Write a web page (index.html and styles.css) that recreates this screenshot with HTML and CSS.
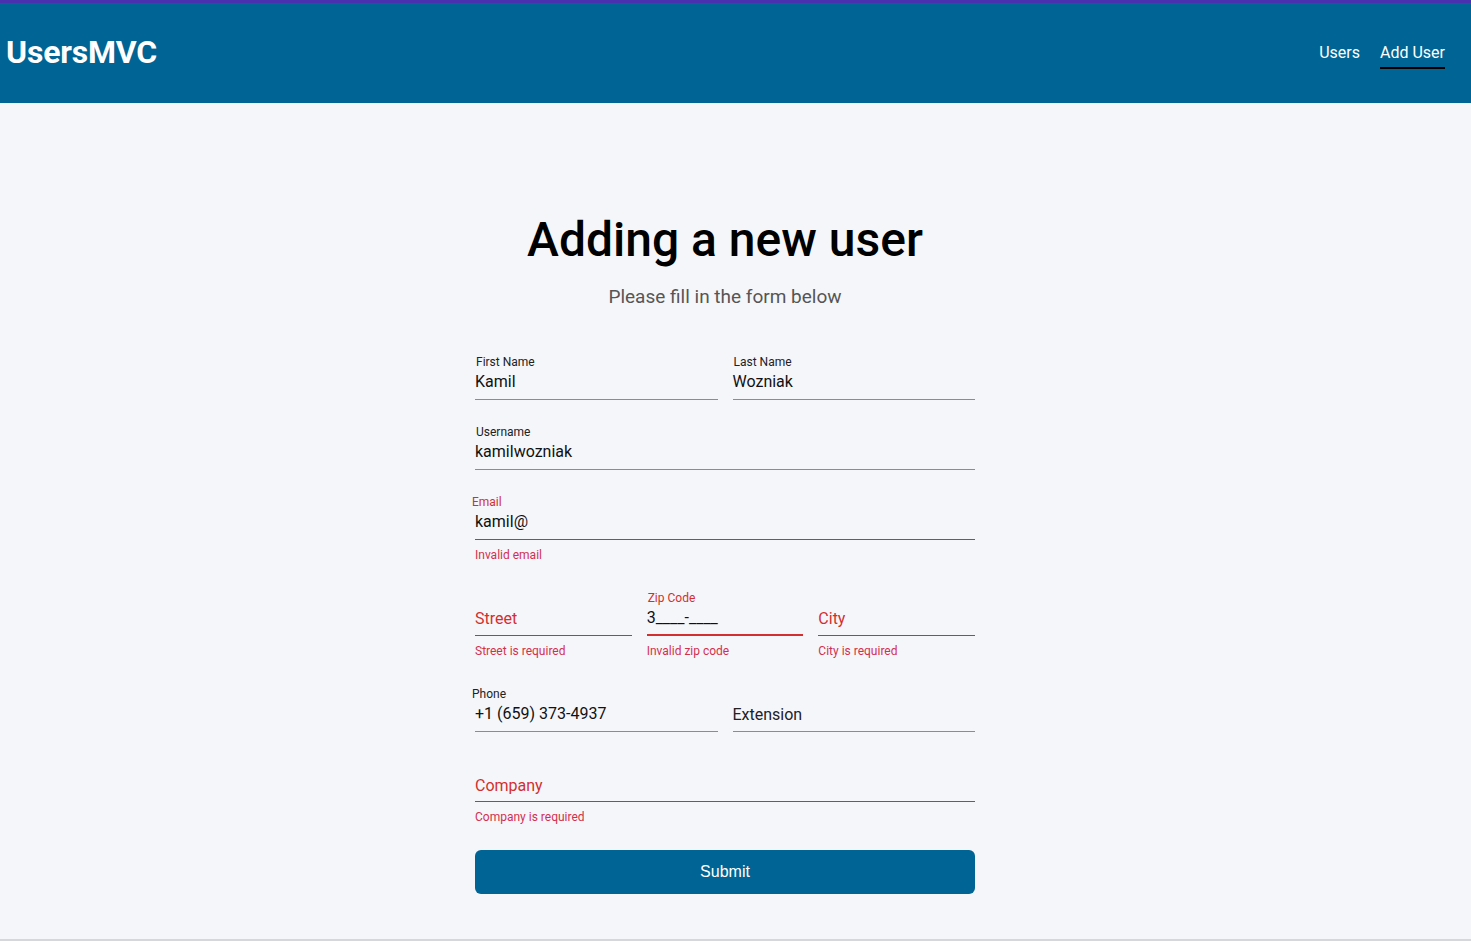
FILE: index.html
```html
<!DOCTYPE html>
<html lang="en">
<head>
<meta charset="utf-8">
<title>UsersMVC</title>
<link rel="stylesheet" href="styles.css">
</head>
<body>
<div class="page">
  <header class="topbar">
    <div class="brand">UsersMVC</div>
    <nav class="nav">
      <a class="nav-link">Users</a>
      <a class="nav-link active">Add User</a>
    </nav>
  </header>
  <main class="main">
    <h1 class="title">Adding a new user</h1>
    <p class="subtitle">Please fill in the form below</p>
    <form class="form">
      <div class="row cols-2">
        <div class="group">
          <div class="field"><div class="label">First Name</div><div class="value">Kamil</div></div>
        </div>
        <div class="group">
          <div class="field"><div class="label">Last Name</div><div class="value">Wozniak</div></div>
        </div>
      </div>
      <div class="row">
        <div class="group">
          <div class="field"><div class="label">Username</div><div class="value">kamilwozniak</div></div>
        </div>
      </div>
      <div class="row">
        <div class="group">
          <div class="field invalid"><div class="label shift">Email</div><div class="value">kamil@</div></div>
          <div class="err">Invalid email</div>
        </div>
      </div>
      <div class="row cols-3">
        <div class="group">
          <div class="field invalid"><div class="label"></div><div class="value placeholder">Street</div></div>
          <div class="err">Street is required</div>
        </div>
        <div class="group">
          <div class="field invalid focused"><div class="label">Zip Code</div><div class="value">3____-____</div></div>
          <div class="err">Invalid zip code</div>
        </div>
        <div class="group">
          <div class="field invalid"><div class="label"></div><div class="value placeholder">City</div></div>
          <div class="err">City is required</div>
        </div>
      </div>
      <div class="row cols-2">
        <div class="group">
          <div class="field"><div class="label shift-sm">Phone</div><div class="value">+1 (659) 373-4937</div></div>
        </div>
        <div class="group">
          <div class="field"><div class="label"></div><div class="value ext">Extension</div></div>
        </div>
      </div>
      <div class="row last">
        <div class="group">
          <div class="field invalid"><div class="label"></div><div class="value placeholder low">Company</div></div>
          <div class="err">Company is required</div>
        </div>
      </div>
      <button type="button" class="submit">Submit</button>
    </form>
  </main>
</div>
</body>
</html>
```

FILE: styles.css
```css
* { box-sizing: border-box; }
html, body { margin: 0; padding: 0; }
body {
  background: #f5f6fa;
  font-family: Roboto, "Liberation Sans", sans-serif;
  color: #111;
}
.page {
  height: 941px;
  overflow: hidden;
  border-bottom: 2px solid #d6d7db;
}
.topbar {
  height: 103px;
  background: #006494;
  border-top: 3px solid #4a2fae;
  display: flex;
  align-items: center;
  justify-content: space-between;
  padding: 0 26px 0 6px;
}
.brand {
  color: #fff;
  font-weight: 700;
  font-size: 32px;
  letter-spacing: -0.2px;
  margin-top: -2px;
}
.nav {
  display: flex;
  gap: 20px;
}
.nav-link {
  color: #fff;
  font-size: 16px;
  line-height: 20px;
  padding-bottom: 4px;
  border-bottom: 2px solid transparent;
  margin-top: 6px;
}
.nav-link.active { border-bottom-color: #000; }
.main {
  width: 1450px;
  display: flex;
  flex-direction: column;
  align-items: center;
}
.title {
  margin: 109px 0 0;
  font-size: 48px;
  line-height: 56px;
  font-weight: 500;
  color: #000;
}
.subtitle {
  margin: 18px 0 0;
  font-size: 19px;
  line-height: 22px;
  color: #555;
}
.form {
  width: 500px;
  margin-top: 46px;
  display: flex;
  flex-direction: column;
}
.row {
  display: grid;
  grid-template-columns: 1fr;
  column-gap: 15px;
  margin-bottom: 24px;
}
.row.last { margin-bottom: 22px; }
.row.cols-2 { grid-template-columns: 1fr 1fr; }
.row.cols-3 { grid-template-columns: 1fr 1fr 1fr; }
.field {
  border-bottom: 1px solid #8c8c8c;
  padding-top: 1px;
  padding-bottom: 7px;
}
.field.invalid { border-bottom-color: #d32f2f; }
.field.focused { border-bottom-width: 2px; padding-bottom: 6px; }
.label {
  height: 14px;
  font-size: 12px;
  line-height: 14px;
  color: #222;
  padding-left: 1px;
}
.field.invalid .label { color: #d32f2f; }
.label.shift { margin-left: -4px; }
.label.shift-sm { margin-left: -4px; }
.value {
  font-size: 16px;
  line-height: 20px;
  height: 20px;
  margin-top: 3px;
  color: #111;
}
.value.placeholder { color: #d32f2f; padding-top: 1px; }
.value.placeholder.low { padding-top: 2px; }
.value.ext { padding-top: 1px; color: #222; }
.err {
  font-size: 12px;
  line-height: 14px;
  margin-top: 8px;
  margin-bottom: 4px;
  color: #d32f4f;
}
.submit {
  height: 44px;
  border: 0;
  border-radius: 6px;
  background: #006494;
  color: #fff;
  font-family: "Liberation Sans", Arial, sans-serif;
  font-size: 16px;
}
```
